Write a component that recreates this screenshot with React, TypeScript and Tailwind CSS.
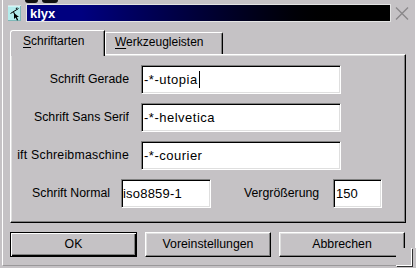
import React from "react";

const bevelOut =
  "border border-t-white border-l-white border-r-black border-b-black shadow-[inset_-1px_-1px_0_#808080,inset_1px_1px_0_#dfdfdf]";
const sunken =
  "bg-white border border-t-[#808080] border-l-[#808080] border-r-white border-b-white shadow-[inset_1px_1px_0_#000,inset_-1px_-1px_0_#dfdfdf]";

function Icon() {
  return (
    <svg width="13" height="16" viewBox="0 0 13 16" className="mt-[1px] shrink-0">
      <rect x="0" y="1" width="13" height="15" fill="#b4ecec" />
      <path d="M0 1h13" stroke="#e8ffff" strokeWidth="1" />
      <path d="M12.5 1v15M0 15.5h13" stroke="#7fb8b8" strokeWidth="1" />
      <path d="M2.5 8.5L10.5 3.5" stroke="#000" strokeWidth="1" />
      <path d="M5.5 6.5L6.5 9.5" stroke="#000" strokeWidth="1" />
      <path d="M8 4L9 2.5" stroke="#000" strokeWidth="1" />
      <path d="M6 8l0 6l1.6-1.5l1.4 3l1.2-0.6l-1.4-2.8l2.2-0.1z" fill="#000" />
    </svg>
  );
}

function CloseX() {
  return (
    <svg width="14" height="13" viewBox="0 0 14 13" className="mt-[3px] ml-[4px] shrink-0">
      <path d="M1 0.5L13 12.5M13 0.5L1 12.5" stroke="#8a888a" strokeWidth="1.4" />
    </svg>
  );
}

function Row({ label, value, caret, wide }: { label: string; value: string; caret?: boolean; wide?: boolean }) {
  return (
    <div className="flex items-center h-[29px]">
      <div className="w-[112px] overflow-hidden flex justify-end whitespace-nowrap text-[12.3px] text-black">
        <span className={`shrink-0 ${wide ? "tracking-[0.24px]" : ""}`}>{label}</span>
      </div>
      <div className={`ml-[12px] w-[200px] h-[29px] flex items-center pl-[2px] ${sunken}`}>
        <span className="text-[13px] tracking-[0.5px] text-black whitespace-nowrap">{value}</span>
        {caret && <span className="ml-[1px] w-[1px] h-[17px] bg-black" />}
      </div>
    </div>
  );
}

export default function App() {
  return (
    <div className="relative w-[416px] h-[268px] bg-[#c5c2c5] flex pl-[2px] overflow-hidden font-['Liberation_Sans',Arial,sans-serif]">
      <div className="absolute left-[25px] top-0 w-[13px] h-[3px] rounded-b-[3px] bg-[#111]" />
      <div className="absolute left-[42px] top-0 w-[16px] h-[3px] rounded-b-[3px] bg-[#111]" />
      <div className="w-[414px] h-[266px] border-l border-white border-r border-black border-b border-b-[#9a989a] flex flex-col">
        {/* title row */}
        <div className="flex items-start pt-[4px] pl-[5px]">
          <Icon />
          <div className="ml-[5px] w-[365px] h-[18px] border border-[#e4e4e4] bg-linear-to-r from-[#000080] from-15% to-black to-90% flex items-center pl-[3px]">
            <span className="text-white font-bold text-[13px] leading-none">klyx</span>
          </div>
          <CloseX />
        </div>

        {/* tabs */}
        <div className="flex items-start mt-[8px] pl-[7px] h-[24px]">
          <div className="relative z-10 w-[95px] h-[26px] bg-[#c5c2c5] border-l border-t border-white border-r border-r-black rounded-tl-[3px] shadow-[inset_-1px_0_0_#808080] pl-[12px] pt-[3px] text-[12px] leading-[14px] text-black whitespace-nowrap">
            <u className="underline-offset-2">S</u>chriftarten
          </div>
          <div className="mt-[2px] w-[118px] h-[22px] border-l border-t border-white border-r border-r-black rounded-tr-[2px] shadow-[inset_-1px_0_0_#808080] pl-[9px] pt-[2px] text-[12px] leading-[14px] text-black whitespace-nowrap">
            <u className="underline-offset-2">W</u>erkzeugleisten
          </div>
        </div>

        {/* panel */}
        <div className={`ml-[7px] w-[396px] h-[169px] pt-[10px] pl-[6px] flex flex-col gap-[9px] ${bevelOut}`}>
          <Row label="Schrift Gerade" value="-*-utopia" caret />
          <Row label="Schrift Sans Serif" value="-*-helvetica" />
          <Row label="Schrift Schreibmaschine" value="-*-courier" wide />
          <div className="flex items-center h-[29px]">
            <div className="w-[93px] flex justify-end whitespace-nowrap text-[12.3px] text-black">Schrift Normal</div>
            <div className={`ml-[11px] w-[90px] h-[29px] flex items-center pl-[1px] ${sunken}`}>
              <span className="text-[13px] tracking-[0.2px] text-black">iso8859-1</span>
            </div>
            <div className="ml-[33px] w-[77px] whitespace-nowrap text-[12.3px] text-black">Vergrößerung</div>
            <div className={`ml-[12px] w-[49px] h-[29px] flex items-center pl-[2px] ${sunken}`}>
              <span className="text-[13px] text-black">150</span>
            </div>
          </div>
        </div>

        {/* buttons */}
        <div className="flex mt-[9px] pl-[7px] gap-[8px]">
          <div className="w-[127px] h-[25px] border border-black shadow-[inset_1px_1px_0_#fff,inset_-1px_-1px_0_#000,inset_-2px_-2px_0_#808080] flex items-center justify-center text-[12.3px] text-black">
            OK
          </div>
          <div className={`w-[126px] h-[25px] flex items-center justify-center text-[12.3px] text-black ${bevelOut}`}>
            Voreinstellungen
          </div>
          <div className={`w-[126px] h-[25px] flex items-center justify-center text-[12.3px] text-black ${bevelOut}`}>
            Abbrechen
          </div>
        </div>
      </div>

      {/* resize grip corner */}
      <div className="absolute left-[396px] top-[248px] w-[20px] h-[20px] bg-[#c5c2c5]">
        <div className="w-[16px] h-[18px] border-r border-b border-white shadow-[1px_1px_0_#303030]" />
      </div>
    </div>
  );
}
